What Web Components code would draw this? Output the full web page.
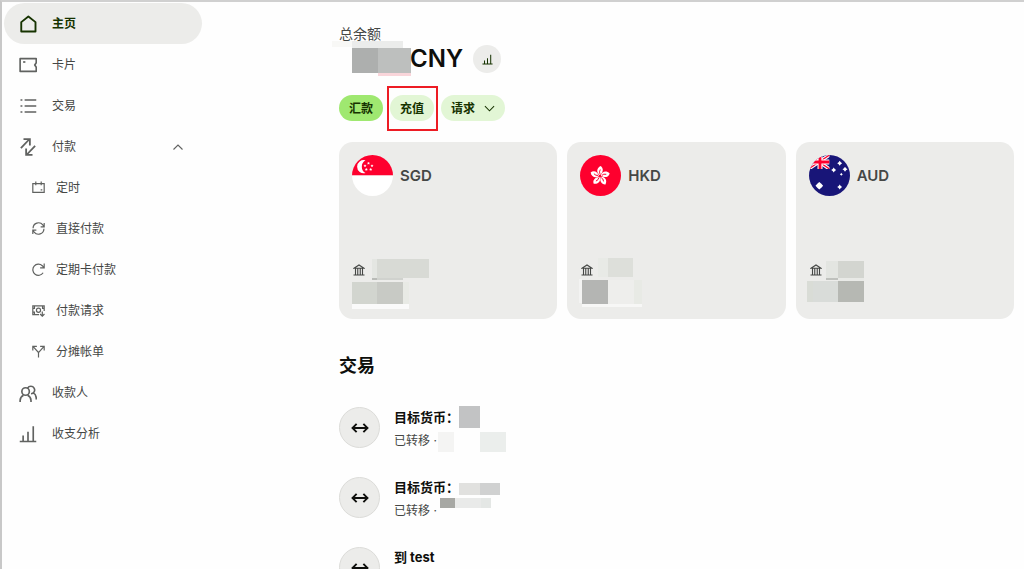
<!DOCTYPE html>
<html lang="zh-CN">
<head>
<meta charset="utf-8">
<meta name="viewport" content="width=device-width, initial-scale=1">
<title>主页</title>
<style>
  html { scrollbar-width: none; }
  body {
    margin: 0; min-height: 100vh; box-sizing: border-box;
    border-left: 2px solid #c8c8c8; border-top: 2px solid #d0d0d0;
    background: #fefefe; color: #0e0f0c;
    font-family: Inter, "Noto Sans CJK SC", sans-serif; font-size: 12px; line-height: 20px;
  }
</style>
</head>
<body>
<app-shell>
  <side-nav slot="nav">
    <nav-item icon="home" active>主页</nav-item>
    <nav-item icon="card">卡片</nav-item>
    <nav-item icon="list">交易</nav-item>
    <nav-item icon="swap" expanded>付款</nav-item>
    <nav-item icon="calendar" sub>定时</nav-item>
    <nav-item icon="sync" sub>直接付款</nav-item>
    <nav-item icon="redo" sub>定期卡付款</nav-item>
    <nav-item icon="cash" sub>付款请求</nav-item>
    <nav-item icon="split" sub>分摊帐单</nav-item>
    <nav-item icon="people">收款人</nav-item>
    <nav-item icon="bars">收支分析</nav-item>
  </side-nav>

  <balance-header label="总余额" currency="CNY">
    <mask-blocks width="71" height="36" blocks="-7 0 20 6 #f8f8f6;13 0 51 7 #ebeceb;13 7 26 25 #adafae;39 7 33 25 #bdbfbe;39 32 33 3 #f9d5da"></mask-blocks>
  </balance-header>

  <action-bar>
    <action-button primary>汇款</action-button>
    <action-button marked>充值</action-button>
    <action-button menu>请求</action-button>
  </action-bar>

  <card-grid>
    <currency-card flag="sg" code="SGD">
      <mask-blocks width="80" height="50" blocks="20 1 5 19 #e4e6e2;25 1 52 19 #d8dad5;20 20 5 2 #b9bbb7;25 20 26 2 #d0d2ce;0 24 25 22 #d2d5cf;25 24 26 22 #c8cac5;51 24 6 22 #e8eae5;0 46 57 5 #fafafa"></mask-blocks>
    </currency-card>
    <currency-card flag="hk" code="HKD">
      <mask-blocks width="80" height="50" blocks="18 0 10 19 #e8eae6;28 0 25 19 #dddfda;-1 21 3 24 #f3f3f2;2 22 26 24 #b4b5b3;28 22 26 24 #eeeeec;54 22 8 24 #e8eae5;2 46 60 3 #f7f7f6"></mask-blocks>
    </currency-card>
    <currency-card flag="au" code="AUD">
      <mask-blocks width="80" height="50" blocks="17 3 12 17 #e3e5e1;29 3 26 17 #d3d5d0;17 20 12 2 #bfc1bd;29 20 26 3 #e8e9e6;-2 23 6 21 #d9dcd6;4 23 25 21 #d9dcd9;29 23 26 21 #b6b8b3"></mask-blocks>
    </currency-card>
  </card-grid>

  <section-title>交易</section-title>
  <transaction-list>
    <transaction-row name="目标货币：" status="已转移 ·">
      <mask-blocks slot="name" width="48" height="22" blocks="0 0 21 22 #c2c3c4"></mask-blocks>
      <mask-blocks slot="status" width="70" height="20" blocks="0 1 16 20 #f4f4f3;42 1 26 20 #ebeeec"></mask-blocks>
    </transaction-row>
    <transaction-row name="目标货币：" status="已转移 ·">
      <mask-blocks slot="name" width="48" height="12" blocks="0 2 21 12 #e1e1df;21 2 20 12 #d0d1d1"></mask-blocks>
      <mask-blocks slot="status" width="70" height="26" blocks="2 0 15 10 #a7a8a4;17 0 26 10 #e9eae9;43 0 10 10 #e4e7e5"></mask-blocks>
    </transaction-row>
    <transaction-row name="到 test"></transaction-row>
  </transaction-list>
</app-shell>

<script>
const svg = (size, body, box = 24) =>
  `<svg width="${size}" height="${size}" viewBox="0 0 ${box} ${box}" fill="none" stroke="currentColor" stroke-width="2.200" aria-hidden="true">${body}</svg>`;

const ICONS = {
  home: '<path d="M3 22V9.500L12.500 2 22 9.500V22z" stroke-linejoin="round" stroke-width="2.500"/>',
  card: '<path d="M1.500 3.500h21.500v5.500l-2 3 2 3v5.500H1.500z" stroke-linejoin="round"/><path d="M5.500 8h3"/>',
  list: '<path d="M7.500 4h15.500M7.500 12h15.500M7.500 20h15.500M2 4h2.500M2 12h2.500M2 20h2.500"/>',
  swap: '<path d="M2.500 13.500 13.500 2M6 1.500h8.500V10M21.500 10.500 10.500 22M9.500 14v8.500H18" stroke-width="2.400"/>',
  calendar: '<path d="M1.500 5h21v16h-21zM7 1v7M17 1v7M16 16.500h3"/>',
  sync: '<path d="M2 11.500a10 10 0 0 1 18-6l2 3M22.500 2v7H16M22 12.500a10 10 0 0 1-18 6l-2-3M1.500 22v-7H8"/>',
  redo: '<path d="M20.500 18A10.300 10.300 0 1 1 19 5l2.500 3M22.500 1v8H15"/>',
  cash: '<path d="M13 19.500H1.500V3.500h21V13M1.500 8h3V3.500M22.500 8h-3V3.500M1.500 15h3v4.500"/><circle cx="12" cy="11.500" r="3.800"/><path d="M19 14v8.500M15 18.500l4 4 4-4"/>',
  split: '<path d="M12 23v-9L3 4M12 14l9-10M1.500 10V2.500H9M22.500 10V2.500H15"/>',
  people: '<circle cx="8.800" cy="10" r="5"/><path d="M1.500 24v-2a8 8 0 0 1 4.500-7M16 24v-2a8 8 0 0 0-4.500-7M11.500 5.500a5 5 0 1 1 4.500 7.500M18.500 11.500a8 8 0 0 1 4.500 7v2"/>',
  bars: '<path d="M1 22h22M5.500 22v-8M12 22V9M19 22V1.500"/>',
  arrows: '<path d="M2.500 12h19M7.500 6.500 2 12l5.500 5.500M16.500 6.500 22 12l-5.500 5.500" stroke-width="2.500"/>',
  bank: '<path d="M2 8.500 12 2l10 6.500zM5 9v12M9.500 9v12M14.500 9v12M19 9v12M1 22h22" stroke-width="2.200"/>',
  up: '<path d="m3 17 9-9 9 9"/>',
  down: '<path d="m2 7 10 10L22 7"/>'
};

const star = (cx, cy, r, n = 4, inner = 0.6) => {
  let pts = [];
  for (let i = 0; i < n * 2; i++) {
    const a = Math.PI * i / n - Math.PI / 2, q = i % 2 ? r * inner : r;
    pts.push((cx + q * Math.cos(a)).toFixed(2) + ',' + (cy + q * Math.sin(a)).toFixed(2));
  }
  return `<polygon points="${pts.join(' ')}" fill="#fff"/>`;
};
const petals = [0, 72, 144, 216, 288].map(a =>
  `<g transform="rotate(${a} 20 21)"><path d="M19.800 20C16.500 18 16 13.500 20.500 11C23.800 13 23.500 17.500 19.800 20z" fill="#fff"/><path d="M20 19q-1.200-2 .3-4.500" stroke="#fe002e" stroke-width=".9" fill="none"/></g>`).join('');
const FLAGS = {
  sg: `<path d="M0 0h41v20.500H0z" fill="#fe002e"/><path d="M0 20.500h41V41H0z" fill="#fff"/>
    <path d="M13.500 5.300a6.600 6.600 0 1 0 0 12.700a7.300 7.300 0 0 1 0-12.700z" fill="#fff"/>` +
    [[16.5, 8.3], [20, 10.8], [18.7, 14.5], [14.3, 14.5], [13, 10.8]].map(p => star(p[0], p[1], 1.6, 5, .5)).join(''),
  hk: `<path d="M0 0h41v41H0z" fill="#fe002e"/>${petals}`,
  au: `<path d="M0 0h41v41H0z" fill="#181578"/>
    <svg x="0" y="0" width="20.500" height="14" viewBox="0 0 20.500 14"><path d="M0 0 20.500 14M20.500 0-2 15" stroke="#fff" stroke-width="3.500"/><path d="M0 0 20.500 14M20.500 0-2 15" stroke="#fe002e" stroke-width="1.300"/><path d="M0 7h20.500M11 0v14" stroke="#fff" stroke-width="5"/><path d="M0 7h20.500M11 0v14" stroke="#fe002e" stroke-width="2.800"/></svg>` +
    star(10.3, 30.7, 3.8, 4, .75) + star(30.7, 8.3, 2.5) + star(24.7, 15, 2.5) + star(36, 14.3, 2.5) + star(32.3, 19.3, 1.5) + star(30.7, 32, 2.5)
};

class Base extends HTMLElement {
  connectedCallback() {
    if (this.shadowRoot) return;
    this.attachShadow({ mode: 'open' }).innerHTML =
      `<style>*{box-sizing:border-box}svg{display:block;flex:none}${this.css()}</style>${this.html()}`;
  }
  attr(n) { return this.getAttribute(n) || ''; }
}
const define = (name, css, html) => customElements.define(name, class extends Base {
  css() { return css; }
  html() { return html(this); }
});

define('app-shell', `
  :host { display: grid; grid-template-columns: 200px minmax(0, 1fr); }
  main { padding: 22px 10px 0 137px; }
`, () => `<slot name="nav"></slot><main><slot></slot></main>`);

define('side-nav', `
  :host { display: block; padding: 1px 0 0 2px; }
  nav { display: flex; flex-direction: column; }
`, () => `<nav aria-label="主导航"><slot></slot></nav>`);

define('nav-item', `
  :host { display: block; color: #454745; }
  a { display: flex; align-items: center; height: 41px; padding: 0 18px 0 15px; gap: 15px;
      border-radius: 21px; color: inherit; text-decoration: none; }
  :host([sub]) a { padding-left: 28px; gap: 11px; }
  :host([active]) { color: #163300; font-weight: 700; }
  :host([active]) a { background: #ececea; }
  svg { opacity: .85; }
  :host([active]) svg { opacity: 1; }
  span { flex: 1; }
`, e => `<a href="#">${svg(e.hasAttribute('sub') ? 13 : 18, ICONS[e.attr('icon')])}<span><slot></slot></span>${e.hasAttribute('expanded') ? svg(12, ICONS.up) : ''}</a>`);

define('mask-blocks', `
  :host { display: block; flex: none; }
  svg { overflow: visible; }
`, e => `<svg width="${e.attr('width')}" height="${e.attr('height')}" shape-rendering="crispEdges" aria-hidden="true">${
  e.attr('blocks').split(';').map(b => {
    const [x, y, w, h, c] = b.trim().split(' ');
    return `<rect x="${x}" y="${y}" width="${w}" height="${h}" fill="${c}"/>`;
  }).join('')}</svg>`);

define('balance-header', `
  :host { display: block; }
  p { margin: 0; font-size: 14px; line-height: 20px; color: #454745; }
  .row { display: flex; align-items: center; height: 30px; }
  strong { font-size: 24px; font-weight: 600; line-height: 30px; }
  button { display: grid; place-items: center; width: 28px; height: 28px; margin-left: 10px; padding: 0;
    border: 0; border-radius: 50%; background: #ececea; color: #163300; }
`, e => `<p>${e.attr('label')}</p><div class="row"><slot></slot><strong>${e.attr('currency')}</strong><button aria-label="收支分析">${svg(11, ICONS.bars)}</button></div>`);

define('action-bar', `
  :host { display: flex; gap: 7px; margin-top: 21px; }
`, () => `<slot></slot>`);

define('action-button', `
  :host { display: block; position: relative; }
  button { display: flex; align-items: center; gap: 9px; height: 26px; padding: 1px 10px 0; border: 0;
    border-radius: 13px; background: #e2f6d5; color: #163300; font: inherit; font-weight: 700; }
  :host([primary]) button { background: #9fe870; }
  :host([marked])::after { content: ""; position: absolute; inset: -9px -4px -10px -3px; border: 2px solid #ed1c24; }
`, e => `<button><slot></slot>${e.hasAttribute('menu') ? svg(11, ICONS.down) : ''}</button>`);

define('card-grid', `
  :host { display: grid; grid-template-columns: repeat(3, minmax(0, 1fr)); gap: 10px; margin-top: 21px; }
`, () => `<slot></slot>`);

define('currency-card', `
  :host { display: flex; flex-direction: column; justify-content: space-between; min-height: 177px;
    padding: 13px 13px 11px; border-radius: 14px; background: #ececea; box-sizing: border-box; }
  header { display: flex; align-items: center; gap: 7px; font-size: 15px; font-weight: 600; color: #454745; }
  .flag { border-radius: 50%; }
  footer { position: relative; height: 50px; padding: 6px 1px; color: #454745; }
  ::slotted(mask-blocks) { position: absolute; left: 0; top: 0; }
`, e => `<header><svg class="flag" width="41" height="41" viewBox="0 0 41 41" aria-hidden="true">${FLAGS[e.attr('flag')]}</svg>${e.attr('code')}</header>
  <footer>${svg(12, ICONS.bank)}<slot></slot></footer>`);

define('section-title', `
  :host { display: block; margin-top: 34px; }
  h2 { margin: 0; font-size: 18px; line-height: 26px; font-weight: 700; }
`, () => `<h2><slot></slot></h2>`);

define('transaction-list', `
  :host { display: flex; flex-direction: column; gap: 22px; margin-top: 27px; }
`, () => `<slot></slot>`);

define('transaction-row', `
  :host { display: flex; gap: 14px; height: 48px; }
  .icon { display: grid; place-items: center; flex: none; width: 41px; height: 41px; margin-top: 1px;
    border: 1px solid #dcdcd9; border-radius: 50%; background: #ececea; }
  .line { display: flex; align-items: center; height: 22px; }
  .name { font-size: 13px; font-weight: 700; line-height: 22px; }
  .status { height: 26px; gap: 1px; color: #454745; }
`, e => `<div class="icon">${svg(18, ICONS.arrows)}</div><div>
  <div class="line name"><span>${e.attr('name')}</span><slot name="name"></slot></div>
  <div class="line status"><span>${e.attr('status')}</span><slot name="status"></slot></div></div>`);
</script>
</body>
</html>
